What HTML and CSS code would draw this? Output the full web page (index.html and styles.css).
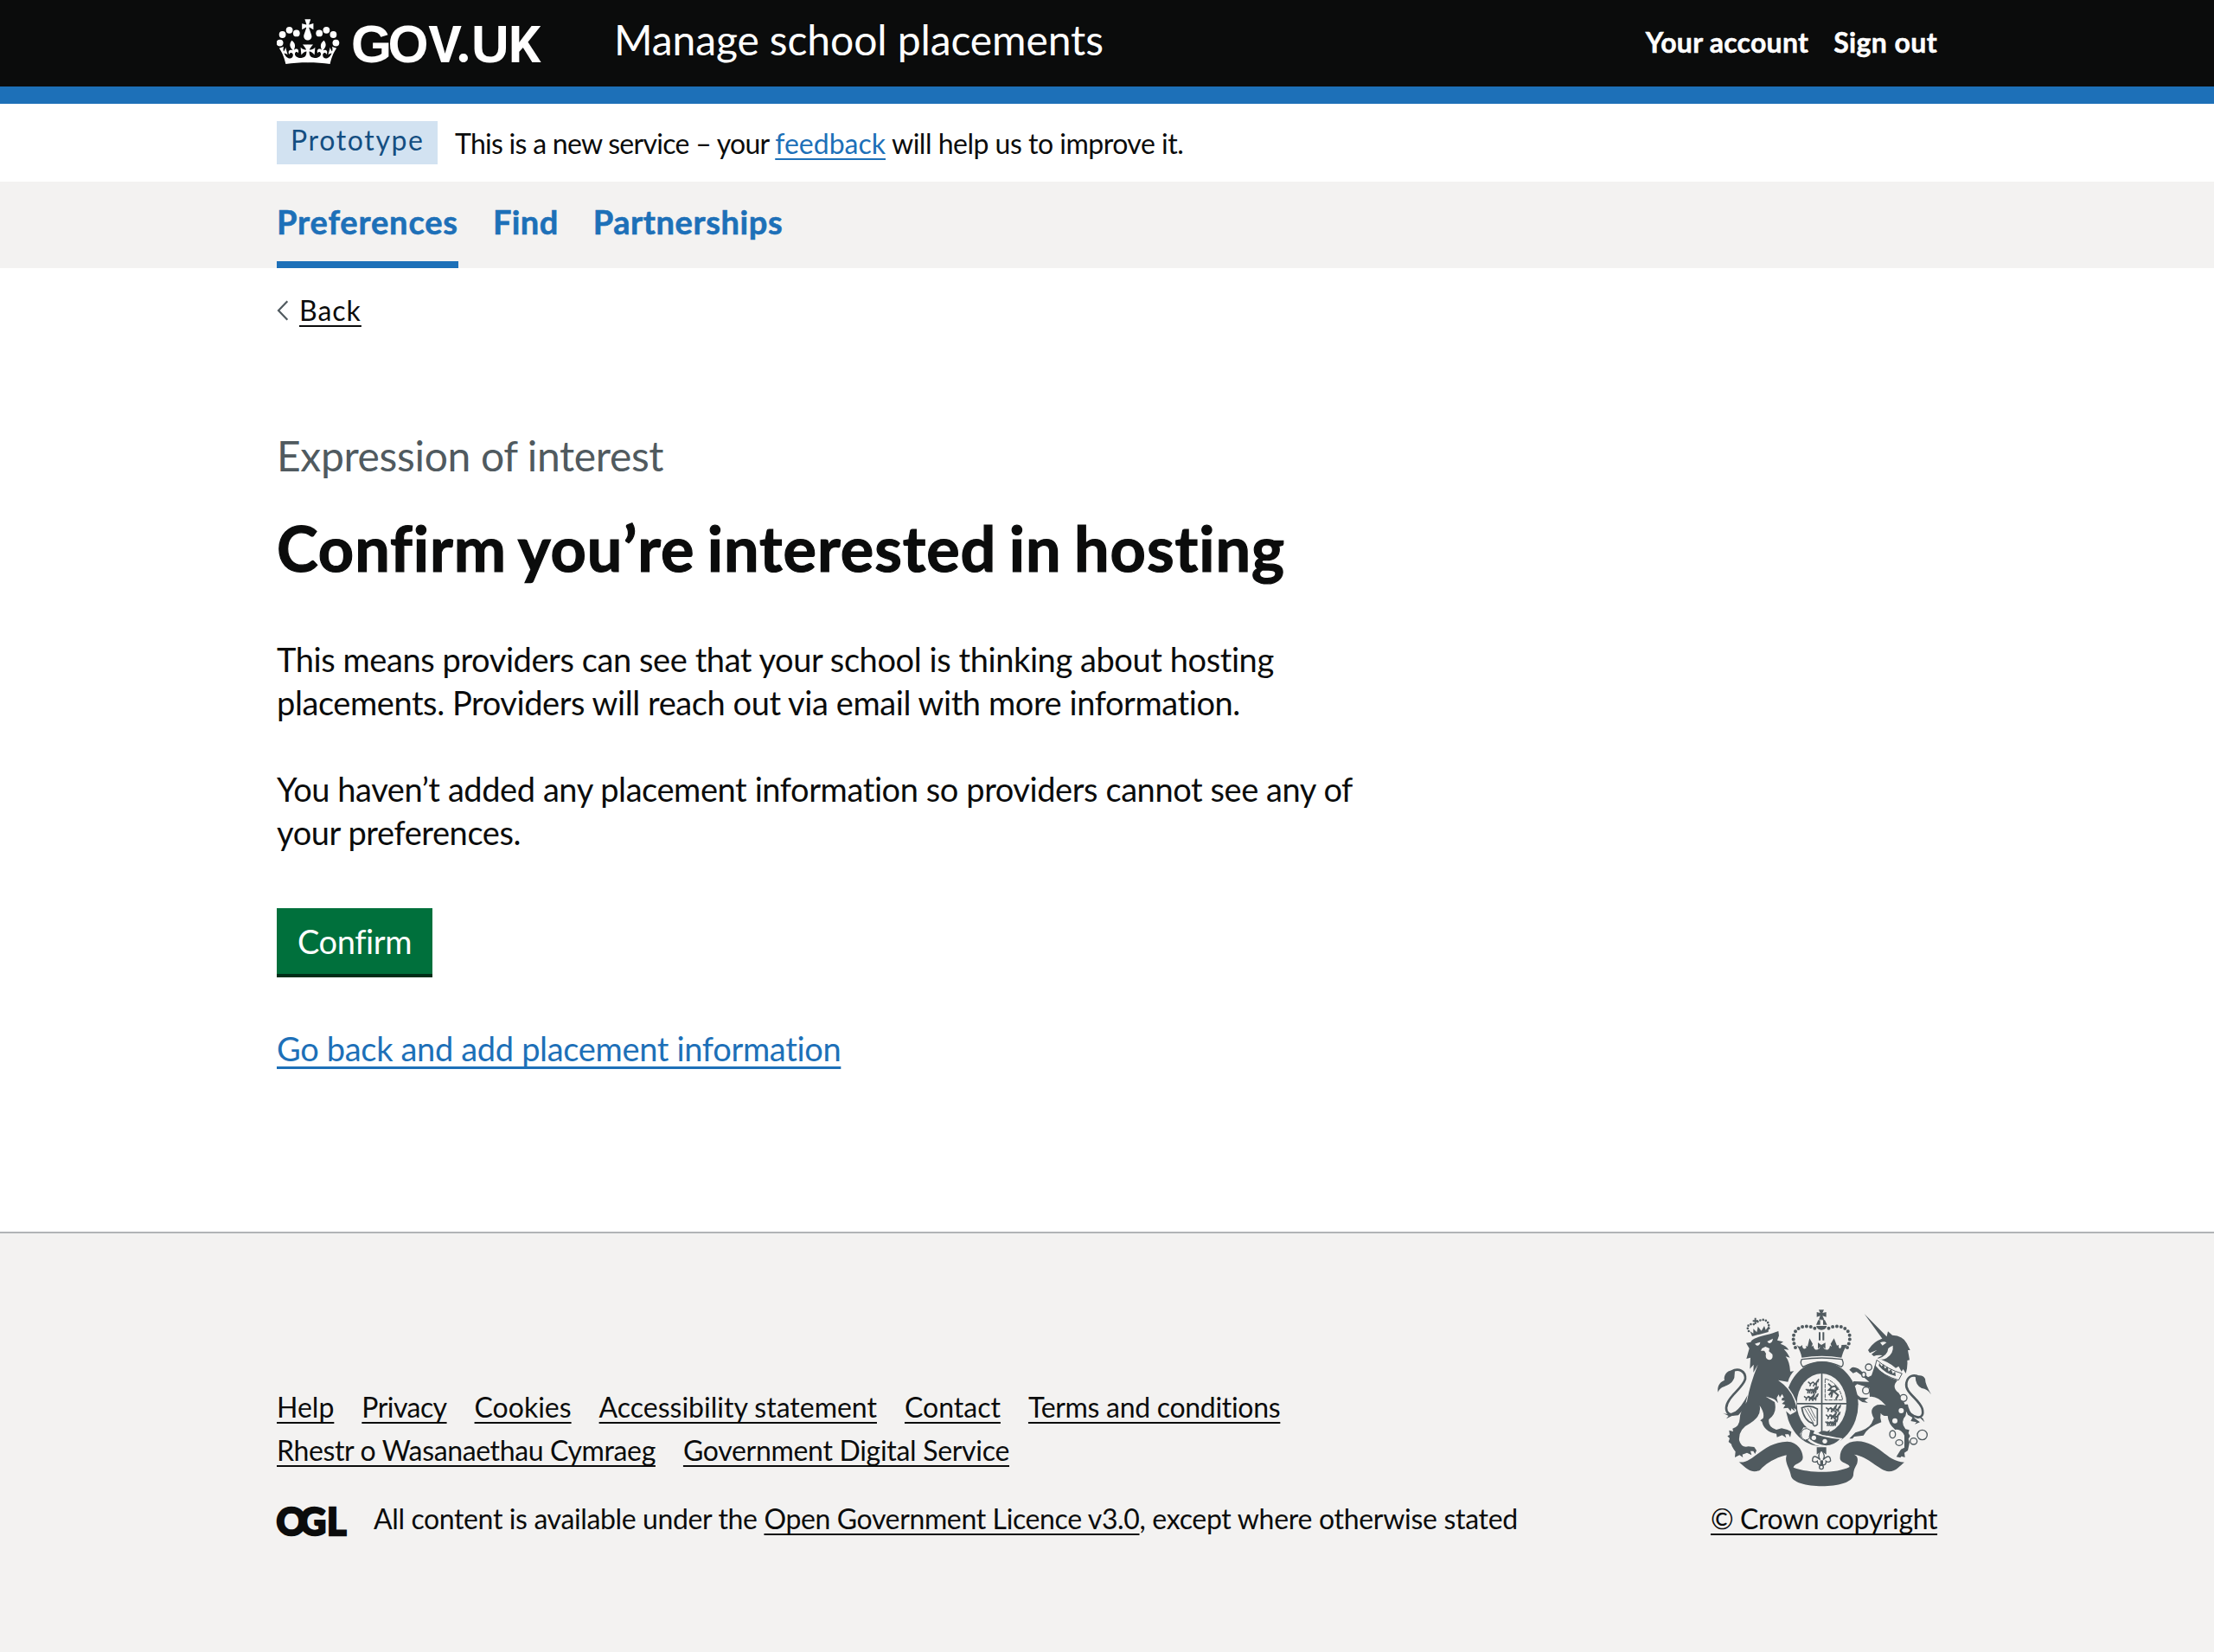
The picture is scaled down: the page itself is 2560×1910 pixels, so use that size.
FILE: index.html
```html
<!DOCTYPE html>
<html lang="en">
<head>
<meta charset="utf-8">
<title>Confirm you’re interested in hosting - Manage school placements - GOV.UK</title>
<link rel="stylesheet" href="styles.css">
</head>
<body>
<header class="header">
  <div class="container header-row">
    <svg class="logo" width="310" height="56" viewBox="0 0 310 56" role="img" aria-label="GOV.UK">
      <defs>
        <g id="crown-half">
          <circle cx="24.6" cy="8.2" r="1.95"/><circle cx="28.7" cy="6.4" r="1.95"/><circle cx="32.7" cy="9" r="1.95"/><circle cx="34.2" cy="13.8" r="1.95"/>
          <path d="M17.9 25.1c4.7 0 9 .3 12.9.9 1.1-4.6 2.4-7.2 3.8-9.1l-2.6-.9c.3 1.3.3 1.9 0 2.8-.4-.4-.8-1.2-1.1-2.4l-1.2 4.2c.8-.5 1.4-.9 2.1-.9-1.2 2.6-2.7 3.2-3.6 3-1.2-.2-1.7-1.2-1.6-2.1.3-1.3 1.6-1.6 2.2-.1 1.2-2.4-.8-3.1-2.1-2.4 1.9-1.9 2.2-3.6.6-5.7-2.2 1.7-2.2 3.3-1.2 5.6-1.3-1.5-3.3-.7-2.5 1.7.9-1.4 2.1-.5 1.9.8-.2 1.2-1.7 2.1-3.7 2-2.8-.2-3-2.2-3-3.7.7-.1 1.9.6 3 2l.4-4.4c-1.1 1.2-2.2 1.4-3.3 1.4.4-1.2 2.1-3.1 2.1-3.1h-3.1z"/>
        </g>
      </defs>
      <g transform="scale(2)">
        <use href="#crown-half"/>
        <use href="#crown-half" transform="matrix(-1 0 0 1 36 0)"/>
        <path d="M18.8 4.8l2.4 1.3V2.5l-2.4.8-.2-.2 1-3h-3.4l1 3-.2.2-2.4-.7v3.5L17 4.8l.1.3-1.4 4.2-.1.7c0 1.1.8 2.1 1.9 2.2h.8c1.1-.2 1.9-1.1 1.9-2.1l-.1-.7-1.4-4.2.1-.4"/>
      </g>
      <g class="logo-text"><text y="50" x="86 128.6 175.5">GO<tspan class="logo-alt">V</tspan></text><text class="logo-dot" y="50" x="208.500">.</text><text y="50" x="225 268">U<tspan class="logo-alt">K</tspan></text></g>
    </svg>
    <a class="service" href="#">Manage school placements</a>
    <nav class="account"><a class="acc-a" href="#">Your account</a><a class="acc-b" href="#">Sign out</a></nav>
  </div>
</header>
<div class="container phase">
  <strong class="tag">Prototype</strong>
  <span class="phase-text"><span class="ph-a">This is a new service – your </span><a class="link" href="#">feedback</a><span class="ph-b"> will help us to improve it.</span></span>
</div>
<div class="subnav">
  <nav class="container subnav-row"><a class="sub-a current" href="#">Preferences</a><a class="sub-b" href="#">Find</a><a class="sub-c" href="#">Partnerships</a></nav>
</div>
<main class="container main">
  <div class="back"><svg width="14" height="24" viewBox="0 0 14 24"><path d="M12.300 1.200L2 12l10.300 10.800" fill="none" stroke="#505a5f" stroke-width="2.200"/></svg><a href="#">Back</a></div>
  <div class="caption">Expression of interest</div>
  <h1>Confirm you’re interested in hosting</h1>
  <p>This means providers can see that your school is thinking about hosting<br>placements. Providers will reach out via email with more information.</p>
  <p>You haven’t added any placement information so providers cannot see any of<br>your preferences.</p>
  <button class="button">Confirm</button>
  <div class="go"><a class="link" href="#">Go back and add placement information</a></div>
</main>
<footer class="footer">
  <div class="container footer-row">
    <div class="meta">
      <ul class="links">
        <li><a href="#">Help</a></li><li><a class="t6" href="#">Privacy</a></li><li><a href="#">Cookies</a></li><li><a href="#">Accessibility statement</a></li><li><a href="#">Contact</a></li><li><a class="t3" href="#">Terms and conditions</a></li>
      </ul>
      <ul class="links"><li><a class="t4" href="#">Rhestr o Wasanaethau Cymraeg</a></li><li><a class="t3" href="#">Government Digital Service</a></li></ul>
      <div class="licence">
        <svg width="82" height="34" viewBox="0 0 82 34" role="img" aria-label="OGL"><text class="ogl" y="32" x="-.5 26 58">OGL</text></svg>
        <span><span class="t4">All content is available under the </span><a class="t4" href="#">Open Government Licence v3.0</a><span class="t3">, except where otherwise stated</span></span>
      </div>
    </div>
    <div class="copyright">
      <svg class="crest" width="250" height="208" viewBox="72 65 750 624" fill="#505a5f" stroke="none">
        <!-- ribbon -->
        <path d="M152 600C200 608 235 530 320 529C362 530 380 575 372 592C366 604 344 606 341 619C400 640 490 640 536 617C534 604 508 606 503 590C500 560 520 528 562 528C640 530 660 598 726 601C712 610 700 632 672 633C640 630 600 580 552 574C566 580 565 592 562 605C555 620 550 625 549 645C545 697 336 697 332 645C328 620 308 600 318 575C335 574 270 578 225 628C200 640 185 630 152 600Z"/>
        <!-- royal crown -->
        <path d="M352 193C366 206 368 196 372 194C370 205 380 212 386 204L384 196L390 200L397 171L408 190L404 200L410 196C412 216 430 214 434 200L426 208V186L438 194L452 186V208L444 200C448 214 466 216 468 196L474 200L470 190L482 171L492 196L498 194C496 210 508 210 508 194L528 193C514 212 512 225 508 238Q440 226 370 238C368 222 362 210 352 193Z"/>
        <path d="M370 244Q440 234 510 244Q518 262 508 270Q440 236 374 270Q362 258 370 244Z" fill="#f3f2f1" stroke="#505a5f" stroke-width="4"/>
        <path d="M429 72H447L442 83L455 80V97L442 93L448 106H429L434 93L422 97V80L434 83ZM434 108H444V124H458L450 108L444 106ZM434 108V124H420L427 108ZM420 128H457Q454 142 438 142Q424 142 420 128ZM429 150h6v28h-6ZM442 150h6v28h-6Z"/>
        <g fill="none" stroke="#505a5f" stroke-width="12" stroke-linecap="round" stroke-dasharray="0 14.600">
          <path d="M348 203C318 130 390 115 424 142"/><path d="M528 203C562 130 488 115 454 142"/>
        </g>
        <!-- garter and shield -->
        <ellipse cx="440" cy="399" rx="126" ry="147"/>
        <ellipse cx="439" cy="397" rx="86" ry="104" fill="#f3f2f1"/>
        <path d="M437 293h5v208h-5ZM353 395h172v5h-172Z"/>
        <g fill="none" stroke="#505a5f" stroke-width="4.500">
          <g id="lions"><path d="M392 322l8 7 9-6 8 7 9-14M398 337l3-8M410 338l4-9M420 337l2-14M429 312l-4 12"/></g>
          <use href="#lions" x="-8" y="25"/><use href="#lions" x="-2" y="25"/><use href="#lions" x="-14" y="50"/><use href="#lions" x="-2" y="50"/>
          <use href="#lions" x="62" y="89"/><use href="#lions" x="76" y="90"/><use href="#lions" x="62" y="114"/><use href="#lions" x="74" y="114"/><use href="#lions" x="60" y="138"/><use href="#lions" x="66" y="138"/>
          <path d="M451 311Q500 325 512 385H451Z" stroke-width="3" stroke-dasharray="14 3"/>
          <path d="M462 328l12 12-10 10 14 2-14 16M474 340l12-4 8 12-12 8 14 12-8 14M478 352l-6 24" stroke-width="6"/>
          <path d="M370 412Q398 400 424 416V470Q412 482 408 466Q378 458 370 412Z" stroke-width="5"/>
          <path d="M380 414L411 466M390 413L415 458M400 412L418 448" stroke-width="2.500"/>
        </g>
        <path d="M376 480Q400 480 412 494Q470 514 512 518Q488 546 456 549Q410 545 390 524Q366 526 364 502Z" fill="#f3f2f1"/>
        <path d="M404 499Q450 516 502 521Q480 543 455 543Q425 540 398 521Z"/>
        <path d="M368 502Q370 484 388 484Q408 490 402 506Q400 522 382 524Q366 518 368 502Z" fill="#f3f2f1" stroke="#505a5f" stroke-width="3"/>
        <path d="M400 488l14 4-8 18-12 6Z"/>
        <path d="M427 499Q440 487 458 494L468 488L461 508Q444 510 427 499Z"/>
        <circle cx="412" cy="516" r="8" fill="#f3f2f1"/><circle cx="450" cy="528" r="8" fill="#f3f2f1"/>
        <path d="M422 549H455V574L438 562L422 574Z"/>
        <path d="M438 558Q454 578 444 592Q468 568 470 596Q462 604 454 597Q456 612 440 610Q424 612 424 597Q414 604 407 596Q408 568 434 592Q422 578 438 558Z" fill="#f3f2f1" stroke="#505a5f" stroke-width="4"/>
        <circle cx="438" cy="618" r="7" fill="#f3f2f1" stroke="#505a5f" stroke-width="4"/>
        <path d="M434 594h10v14h-10Z"/>
        <!-- lion -->
        <path d="M288 314Q330 335 352 392L350 425L330 436L300 410Z" fill="#f3f2f1"/>
        <path d="M177 187L193 184C200 165 240 165 289 146L291 162L285 178L306 183L296 190Q316 196 325 211L308 208Q320 220 329 238L314 234Q328 252 330 286L343 285Q330 296 322 322L288 316Q330 345 344 385Q352 405 352 420L343 412L346 424L334 414L332 424L322 412L306 414L313 402L301 398L312 388L300 386L302 378L308 376L302 364L294 376L290 366L283 378L288 396Q276 380 262 378Q250 374 245 373L276 392Q286 430 256 452Q252 480 282 488L300 483L320 488L334 495L330 514L324 504L312 504L316 516L302 507L284 514L282 502Q240 495 232 460L226 456L236 448Q242 430 224 404Q232 440 190 466Q150 485 153 525Q160 552 185 546L205 548L213 560L208 572L202 562L192 562L196 576L180 568L164 574L166 584L154 576L138 584L140 564Q126 545 126 538L116 530L120 518L112 510L120 506L118 490L132 494L130 484Q154 478 155 450Q155 425 180 390Q190 330 218 262L202 290L203 262L190 277L192 238L178 242L188 206Z"/>
        <path d="M207 190L226 184Q224 198 214 196ZM250 182L270 172Q268 188 256 188ZM232 206L244 200L258 206L256 216L268 226Q272 244 257 246Q242 244 246 224L240 214L228 214Z" fill="#f3f2f1"/>
        <path d="M190 146L198 164L254 149L256 128L245 142L240 128L230 145L218 130L214 150L202 138L202 154ZM206 100h6v8h7v6h-7v8h-6v-8h-6v-6h6Z"/>
        <path d="M186 146C174 124 194 118 210 124M256 136C258 104 232 100 214 116" fill="none" stroke="#505a5f" stroke-width="8" stroke-linecap="round" stroke-dasharray="0 10"/>
        <path d="M172 395C150 445 108 445 108 412C110 375 165 345 174 312C176 284 150 272 126 286" fill="none" stroke="#505a5f" stroke-width="8"/>
        <path d="M138 285C115 275 97 300 102 316C82 324 76 342 80 358C90 330 122 344 136 308ZM96 430Q115 438 140 424Q160 410 182 368L172 412L150 438L128 440L108 450L116 440Z"/>
        <!-- unicorn -->
        <path d="M587 86L666 166L652 176ZM600 212L612 196Q630 176 664 168L669 147L684 160Q722 162 734 188L746 212L738 212L744 246L736 248Q738 270 731 293L722 278L716 286L706 268L696 274Q670 252 632 240L650 230Q630 228 620 233L612 226L630 212L606 222Z"/>
        <path d="M642 186Q656 180 664 186L650 196ZM686 196Q690 222 664 240Q648 248 634 242Q668 232 670 206Q676 200 686 196Z" fill="#f3f2f1"/>
        <path d="M630 246Q670 280 718 293L706 316Q655 302 624 270Z" fill="#f3f2f1" stroke="#505a5f" stroke-width="3"/>
        <path d="M637 266l2-10 8 12 7-8 4 16 10-6 3 16 9-8 6 16 8-8 2 16Q660 294 637 266Z"/>
        <path d="M624 264Q655 304 702 317Q680 340 706 360Q740 410 730 440Q710 460 730 486L743 489L740 500L746 510L740 520L744 532L738 560L726 568L728 584L716 580L712 585L698 582L714 556L726 550L726 508Q714 484 694 488Q670 468 668 440Q650 442 644 430Q640 446 646 462Q600 478 584 508L552 512L546 519H535L556 498Q600 486 612 466L620 448Q600 415 632 402Q650 400 662 404Q632 370 606 374Q604 350 604 342Q575 334 562 330L550 340L556 362L574 376L602 378L588 386L600 395L580 392L550 372L540 336L550 320L604 322Q580 300 560 287L548 292L535 280L544 272Q562 268 582 290L600 306L612 300Z"/>
        <path d="M726 408C748 448 800 462 788 415C776 380 726 360 733 325C738 300 760 294 778 306" fill="none" stroke="#505a5f" stroke-width="8"/>
        <path d="M764 302Q790 294 798 312Q798 330 819 366Q806 346 786 344Q764 334 764 302ZM722 400L738 436L754 446L748 458L768 462L762 469L780 462L762 448Q740 420 738 400ZM776 440L790 448L796 462L782 448Z"/>
        <circle cx="715" cy="422" r="9" fill="#f3f2f1"/><circle cx="693" cy="457" r="9" fill="#f3f2f1"/>
        <g fill="#f3f2f1" stroke="#505a5f" stroke-width="4">
          <circle cx="602" cy="271" r="11"/><ellipse cx="585" cy="297" rx="7" ry="9"/><circle cx="593" cy="352" r="12"/><circle cx="723" cy="378" r="12"/>
          <ellipse cx="685" cy="504" rx="10" ry="13"/><ellipse cx="708" cy="533" rx="12" ry="10"/><ellipse cx="758" cy="528" rx="12" ry="11"/><circle cx="788" cy="506" r="17"/>
        </g>
      </svg>
      <a class="t4" href="#">© Crown copyright</a>
    </div>
  </div>
</footer>
</body>
</html>
```
FILE: styles.css
```css
* { box-sizing: border-box; }
body { margin: 0; font-family: "Lato", "Liberation Sans", sans-serif; font-size: 32px; color: #0b0c0c; background: #fff; }
a { color: inherit; text-decoration: underline; text-decoration-thickness: 2px; text-underline-offset: 5px; text-decoration-skip-ink: none; }
svg { display: block; }
.container { width: 1920px; margin: 0 auto; }

.header { height: 120px; background: #0b0c0c; border-bottom: 20px solid #1d70b8; color: #fff; }
.header-row { display: flex; }
.header a { text-decoration: none; }
.logo { margin-top: 22px; fill: #fff; flex: none; }
.logo-text { font: 700 60.5px "Liberation Sans", sans-serif; }
.logo-alt { font: 700 58.5px "Roboto", sans-serif; }
.logo-dot { font: 900 62px "Lato", sans-serif; }
.service { margin: 16px 0 0 80px; font-size: 48px; line-height: 60px; letter-spacing: -0.1px; }
.account { margin-left: auto; padding-top: 29px; display: flex; gap: 29px; font-weight: 700; line-height: 40px; -webkit-text-stroke: 0.5px; }
.acc-a { letter-spacing: 0.25px; }
.acc-b { letter-spacing: 0.4px; }

.phase { display: flex; align-items: flex-start; gap: 20px; height: 90px; padding-top: 20px; }
.tag { width: 186px; padding: 0 0 6px 16px; line-height: 44px; font-weight: 400; letter-spacing: 1.65px; color: #144e81; background: #d2e2f1; }
.phase-text { margin-top: 6px; line-height: 40px; white-space: pre; }
.ph-a { letter-spacing: -0.72px; }
.ph-b { letter-spacing: -0.5px; }
.link { color: #1d70b8; }

.subnav { height: 100px; background: #f3f2f1; }
.subnav-row { display: flex; gap: 40px; padding-top: 21px; }
.subnav a { height: 79px; font-size: 38px; font-weight: 700; line-height: 50px; color: #1d70b8; text-decoration: none; -webkit-text-stroke: 0.6px; }
.subnav .current { border-bottom: 8px solid #1d70b8; }
.sub-a { letter-spacing: 0.85px; }
.sub-b { letter-spacing: 0.4px; }
.sub-c { letter-spacing: 0.6px; }

.main { height: 1114px; padding-top: 29px; }
.back { display: flex; align-items: center; gap: 12px; line-height: 40px; letter-spacing: 1px; }
.caption { margin-top: 118px; font-size: 48px; line-height: 60px; letter-spacing: -0.35px; color: #505a5f; }
h1 { margin: 36px 0 64px; font-size: 72px; line-height: 80px; letter-spacing: 0.95px; word-spacing: -4px; -webkit-text-stroke: 1.2px; }
p { margin: 0 0 50px; font-size: 38px; line-height: 50px; letter-spacing: -0.42px; }
.button { display: block; width: 180px; height: 80px; margin: 63px 0 57px; padding: 0 0 1px; border: 0; border-bottom: 4px solid #002d18; background: #00703c; color: #fff; font: 400 38px/50px "Lato", "Liberation Sans", sans-serif; letter-spacing: -0.4px; }
.go { font-size: 38px; line-height: 50px; letter-spacing: -0.33px; }
.go a { text-decoration-thickness: 3px; text-underline-offset: 6px; }

.footer { height: 486px; background: #f3f2f1; border-top: 2px solid #b1b4b6; }
.footer-row { display: flex; justify-content: space-between; }
.meta { padding-top: 176px; }
.links { display: flex; gap: 32px; margin: 0; padding: 0; list-style: none; line-height: 50px; }
.licence { display: flex; gap: 30px; margin-top: 34px; line-height: 40px; white-space: pre; }
.licence svg { margin-top: 7px; overflow: visible; }
.ogl { font: 900 43px "Lato", sans-serif; fill: #0b0c0c; stroke: #0b0c0c; stroke-width: 2.4px; }
.t3 { letter-spacing: -0.3px; }
.t4 { letter-spacing: -0.37px; }
.t6 { letter-spacing: -0.55px; }
.copyright { width: 262px; padding-top: 86px; display: flex; flex-direction: column; align-items: center; line-height: 40px; white-space: nowrap; }
.crest { margin-bottom: 16px; }
```
